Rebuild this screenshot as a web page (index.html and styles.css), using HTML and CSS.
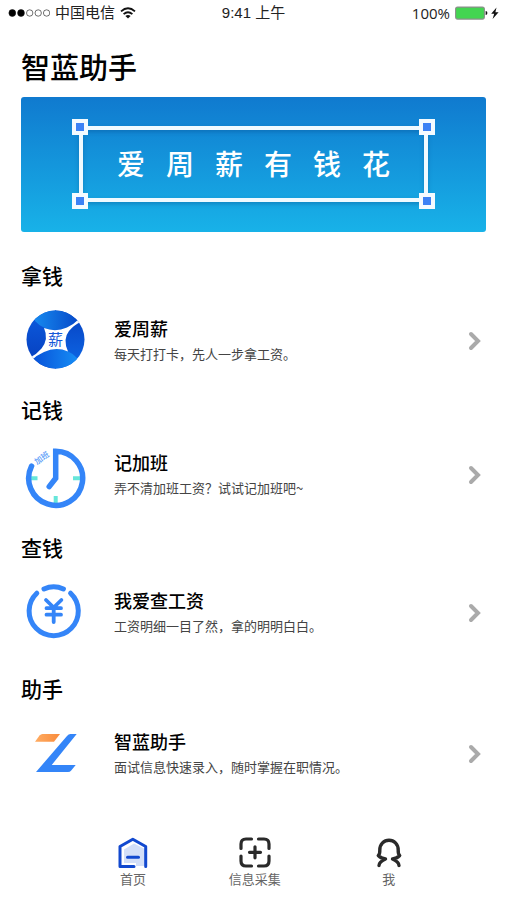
FILE: index.html
```html
<!DOCTYPE html>
<html lang="zh-CN">
<head>
<meta charset="utf-8">
<meta name="viewport" content="width=device-width, initial-scale=1">
<title>智蓝助手</title>
<link rel="stylesheet" href="styles.css">
</head>
<body>
<div class="app">
  <div class="status">
    <div class="status-side">
      <svg class="signal" width="42" height="10" viewBox="0 0 42 10" aria-hidden="true">
        <g stroke="#111" stroke-width=".6"><circle cx="4.300" cy="5" r="3.400" fill="#000"/><circle cx="13" cy="5" r="3.400" fill="#000"/><circle cx="21.700" cy="5" r="3.200" fill="none"/><circle cx="30.200" cy="5" r="3.200" fill="none"/><circle cx="38.600" cy="5" r="3.200" fill="none"/></g>
      </svg>
      <span>中国电信</span>
      <svg width="16" height="12" viewBox="0 0 16 12" aria-hidden="true">
        <g fill="none" stroke="#111" stroke-width="1.8"><path d="M1 4.400Q8-1.800 15 4.400"/><path d="M3.600 7.200Q8 3.200 12.400 7.200"/></g><path d="M8 11.600L5.400 9Q8 7 10.600 9Z" fill="#111"/>
      </svg>
    </div>
    <span>9:41 上午</span>
    <div class="status-side status-end">
      <span class="percent">100%</span>
      <svg width="44" height="14" viewBox="0 0 44 14" aria-hidden="true">
        <rect x=".6" y="1.100" width="28.800" height="12" rx="2" fill="#43d551" stroke="#8b8f8b" stroke-width="1.1"/><path d="M30.600 5q1.800 0 1.800 2t-1.800 2Z" fill="#111"/><path d="M41.500 1.500l-5.300 6.200h3l-1.600 5.200 6-6.600h-3.200Z" fill="#111"/>
      </svg>
    </div>
  </div>

  <main class="content">
    <h1 class="title">智蓝助手</h1>
    <div class="banner">
      <div class="frame">
        <i class="handle top left"></i><i class="handle top right"></i>
        <i class="handle bottom left"></i><i class="handle bottom right"></i>
        <p class="slogan">爱周薪有钱花</p>
      </div>
    </div>

    <div class="sections">
      <section>
        <h2 class="heading">拿钱</h2>
        <a class="row" href="#salary">
          <svg class="logo" width="64" height="72" viewBox="0 0 64 72" aria-hidden="true">
            <defs>
              <linearGradient id="petalTop" x1="0" x2="1"><stop offset="0" stop-color="#1688ee"/><stop offset="1" stop-color="#0648c8"/></linearGradient>
              <linearGradient id="petalBottom" x1="0" x2="1"><stop offset="0" stop-color="#0750d8"/><stop offset="1" stop-color="#168cf4"/></linearGradient>
              <linearGradient id="petalSide" x1="0" y1="0" x2="0" y2="1"><stop offset="0" stop-color="#0c5ce0"/><stop offset="1" stop-color="#063cba"/></linearGradient>
              <linearGradient id="petalRight" x1="0" y1="0" x2="0" y2="1"><stop offset="0" stop-color="#0640c0"/><stop offset="1" stop-color="#0e6ae8"/></linearGradient>
              <clipPath id="coin"><circle cx="32.500" cy="34.500" r="29"/></clipPath>
            </defs>
            <g clip-path="url(#coin)">
              <rect x="3" y="5" width="30" height="60" fill="url(#petalSide)"/>
              <rect x="32" y="5" width="30" height="60" fill="url(#petalRight)"/>
              <path d="M12 16V4H56V15Q46 25 33 25T12 16Z" fill="url(#petalTop)"/>
              <path d="M9 54Q20 44 33 44T54 53V66H9Z" fill="url(#petalBottom)"/>
              <path d="M21 23Q32.500 27.500 44 22.500Q50 20 56 14L57.500 17Q51 20 46 26Q39.500 34 45 46.500Q33 41.500 21 47Q14 50 9 55L7 52.500Q14 49 18.500 43.500Q26 34 21 23Z" fill="#fff"/>
            </g>
            <text x="32.500" y="40" class="coin-text">薪</text>
          </svg>
          <span class="copy"><strong class="name">爱周薪</strong><span class="desc">每天打打卡，先人一步拿工资。</span></span>
          <svg class="chevron" width="14" height="20" viewBox="0 0 14 20" aria-hidden="true"><path d="M3 3l7 7-7 7"/></svg>
        </a>
      </section>
      <section>
        <h2 class="heading">记钱</h2>
        <a class="row" href="#overtime">
          <svg class="logo" width="64" height="72" viewBox="0 0 64 72" aria-hidden="true">
            <g fill="none" stroke="#66e6da" stroke-width="4"><path d="M8 39.300h6.500M50 39.300h7M32.700 57v7"/></g>
            <path d="M26.200 47.600L32.700 39.300V12.300A27 27 0 1 1 8.600 27.100" fill="none" stroke="#3485f8" stroke-width="5.500" stroke-linecap="round"/>
            <text x="0" y="0" class="clock-text" transform="translate(14 26) rotate(-36)">加班</text>
          </svg>
          <span class="copy"><strong class="name">记加班</strong><span class="desc">弄不清加班工资？试试记加班吧~</span></span>
          <svg class="chevron" width="14" height="20" viewBox="0 0 14 20" aria-hidden="true"><path d="M3 3l7 7-7 7"/></svg>
        </a>
      </section>
      <section>
        <h2 class="heading">查钱</h2>
        <a class="row" href="#payslip">
          <svg class="logo" width="64" height="72" viewBox="0 0 64 72" aria-hidden="true">
            <g fill="none" stroke="#3485f8" stroke-width="5" stroke-linecap="round" stroke-linejoin="round"><path d="M47.600 16.200A24.600 24.600 0 1 1 13.800 16.200"/><path d="M21 12Q30.700 7.500 40.400 12"/><path d="M23 23l7.700 7.500 7.700-7.500M30.700 31v14M23.500 31.200h14.500M23.500 37.700h14.500" stroke-width="3.800"/></g>
          </svg>
          <span class="copy"><strong class="name">我爱查工资</strong><span class="desc">工资明细一目了然，拿的明明白白。</span></span>
          <svg class="chevron" width="14" height="20" viewBox="0 0 14 20" aria-hidden="true"><path d="M3 3l7 7-7 7"/></svg>
        </a>
      </section>
      <section>
        <h2 class="heading">助手</h2>
        <a class="row" href="#assistant">
          <svg class="logo" width="64" height="72" viewBox="0 0 64 72" aria-hidden="true">
            <defs><linearGradient id="flag" x1="0" x2="1"><stop offset="0" stop-color="#ffac62"/><stop offset="1" stop-color="#f98b3c"/></linearGradient></defs>
            <path d="M12 23.700L16.500 17.500Q17.700 16 19.500 16H37L31 23.700Z" fill="url(#flag)"/><path d="M53.700 16H47.500Q45.500 16 44 18L13 54H45Q47 54 48.200 52.500L52.700 47H28.700Z" fill="#3485f8"/>
          </svg>
          <span class="copy"><strong class="name">智蓝助手</strong><span class="desc">面试信息快速录入，随时掌握在职情况。</span></span>
          <svg class="chevron" width="14" height="20" viewBox="0 0 14 20" aria-hidden="true"><path d="M3 3l7 7-7 7"/></svg>
        </a>
      </section>
    </div>
  </main>

  <nav class="tabs">
    <a class="tab" href="#home">
      <svg width="36" height="36" viewBox="0 0 36 36" aria-hidden="true"><path d="M9 15.500L19 9.500 30 15V32H21V29H9Z" fill="#d3dff8"/><g fill="none" stroke="#1249cf" stroke-width="3" stroke-linecap="round" stroke-linejoin="round"><path d="M19 32.500H5V12.500L17.800 5.200 30.700 12.500V32.500"/><path d="M12.500 23.300h11"/></g></svg>
      <span>首页</span>
    </a>
    <a class="tab" href="#collect">
      <svg width="36" height="36" viewBox="0 0 36 36" aria-hidden="true"><g transform="translate(0 1)" fill="none" stroke="#2a2a2a" stroke-width="3.200" stroke-linecap="round"><path d="M14.500 4H9Q4 4 4 9V13.500M21.500 4H27Q32 4 32 9V13.500M32 21V26Q32 31 27 31H21.500M14.500 31H9Q4 31 4 26V21"/><path d="M18 11.800v11M12.500 17.300h11"/></g></svg>
      <span>信息采集</span>
    </a>
    <a class="tab tab-wide" href="#me">
      <svg width="36" height="36" viewBox="0 0 36 36" aria-hidden="true"><path transform="translate(0 1)" d="M8 30.500Q8 27 14.500 24 10 23.500 7.300 20.500 9 19 8.800 15C8.800 9 13 5.300 18 5.300S27.200 9 27.200 15Q27 19 28.700 20.500 26 23.500 21.500 24 28 27 28 30.500" fill="none" stroke="#2a2a2a" stroke-width="3.400" stroke-linecap="round" stroke-linejoin="round"/></svg>
      <span>我</span>
    </a>
  </nav>
</div>
</body>
</html>
```

FILE: styles.css
```css
* { box-sizing: border-box; }

body {
  margin: 0;
  background: #fff;
  color: #000;
  font-family: "Noto Sans CJK SC", sans-serif;
}

h1, h2, p { margin: 0; }
a { color: inherit; text-decoration: none; }
svg { display: block; flex: none; }

.app {
  display: flex;
  flex-direction: column;
  min-height: 100vh;
}

.status {
  display: flex;
  align-items: center;
  height: 26px;
  padding: 0 8px;
  color: #222;
  font-family: "Liberation Sans", "Noto Sans CJK SC", sans-serif;
  font-size: 15px;
  line-height: 20px;
}

.status-side {
  display: flex;
  flex: 1;
  align-items: center;
  gap: 5px;
}

.status-end { justify-content: flex-end; }

.percent { font-family: "Open Sans", sans-serif; }

.content {
  flex: 1;
  padding: 0 21px;
}

.title {
  margin: 20px 0 11px;
  font-size: 29px;
  font-weight: 500;
  line-height: 40px;
}

.banner {
  height: 135px;
  padding: 29px 58px;
  border-radius: 3px;
  background: linear-gradient(#107acf, #18b2e8);
}

.frame {
  position: relative;
  display: flex;
  align-items: flex-start;
  justify-content: center;
  height: 76px;
  padding-top: 13px;
  border: 4px solid #f0faff;
  box-shadow: 0 2px 4px rgba(0, 60, 120, .3), inset 0 2px 4px rgba(0, 60, 120, .3);
}

.handle {
  position: absolute;
  width: 16px;
  height: 16px;
  border: 4px solid #f4fbff;
  background: #3c82f5;
}

.top { top: -11px; }
.bottom { bottom: -11px; }
.left { left: -11px; }
.right { right: -11px; }

.slogan {
  padding-left: 21px;
  color: #fff;
  font-size: 28px;
  font-weight: 500;
  letter-spacing: 21px;
  line-height: 40px;
  white-space: nowrap;
}

.sections {
  display: grid;
  grid-template-rows: 134px 138px 141px auto;
  margin-top: 27px;
}

.heading {
  margin-bottom: 14px;
  font-size: 21px;
  font-weight: 500;
  line-height: 32px;
}

.row {
  display: flex;
  align-items: center;
  height: 72px;
  padding: 0 4px 0 2px;
}

.copy {
  display: flex;
  flex: 1;
  flex-direction: column;
  padding-left: 27px;
  line-height: 26px;
}

.name {
  font-size: 18px;
  font-weight: 500;
}

.desc {
  color: #444;
  font-size: 13px;
}

.chevron {
  fill: none;
  stroke: #aaa;
  stroke-width: 4;
  stroke-linecap: round;
}

.coin-text {
  fill: #1558d8;
  font-size: 15px;
  text-anchor: middle;
}

.clock-text {
  fill: #5a9cf8;
  font-size: 8px;
  font-weight: 500;
}

.tabs {
  display: flex;
  padding: 0 45px 12px 72px;
}

.tab {
  display: flex;
  flex: 5 0 0;
  flex-direction: column;
  align-items: center;
  color: #666;
  font-size: 13px;
  line-height: 18px;
}

.tab-wide { flex-grow: 6; }
```
